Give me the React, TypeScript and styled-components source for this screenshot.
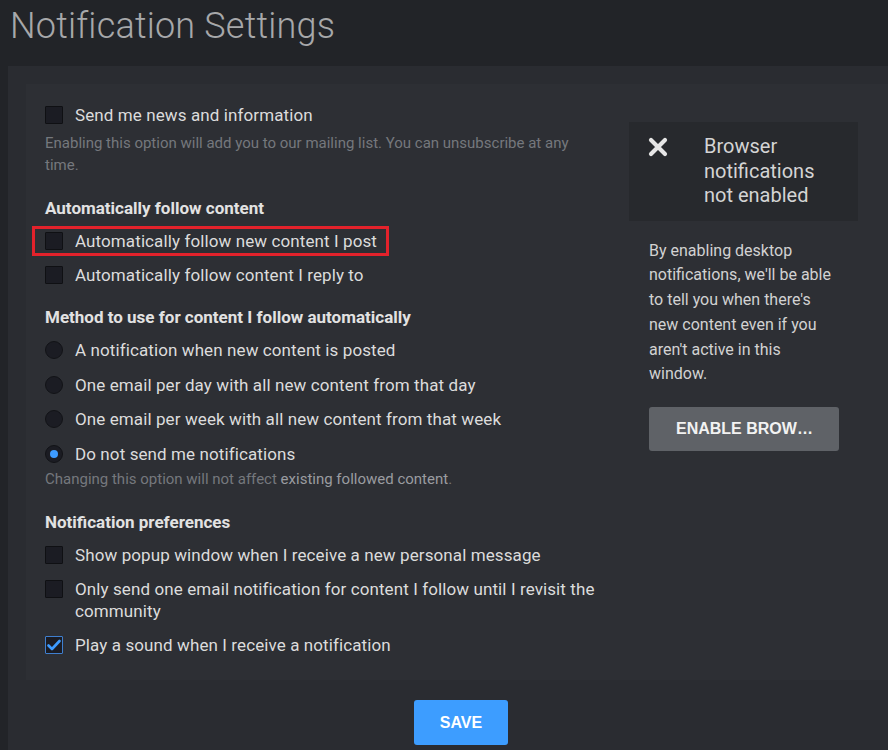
import React from "react";
import styled, { createGlobalStyle } from "styled-components";

const GlobalStyle = createGlobalStyle`
  html, body { margin: 0; padding: 0; background: #222428; }
  body { font-family: Roboto, "Noto Sans", Arial, sans-serif; overflow: hidden; }
  * { box-sizing: border-box; }
`;

const Page = styled.div`
  padding-left: 8px;
  min-height: 750px;
`;

const Title = styled.h1`
  margin: 0;
  height: 66px;
  padding: 8px 0 0 2px;
  font-family: Roboto, sans-serif;
  font-weight: 300;
  font-size: 36px;
  line-height: 36px;
  color: #a7a8aa;
  letter-spacing: 0.2px;
`;

const OuterPanel = styled.div`
  background: #2a2c31;
  padding: 18px 0 0 18px;
  min-height: 700px;
`;

const InnerPanel = styled.div`
  background: #2d2f34;
  padding: 14px 19px 18px 19px;
  display: flex;
  gap: 32px;
`;

const LeftCol = styled.div`
  width: 552px;
  display: flex;
  flex-direction: column;
`;

const RightCol = styled.div`
  width: 229px;
  margin-top: 24px;
  display: flex;
  flex-direction: column;
`;

const Row = styled.label<{ $highlight?: boolean; $radio?: boolean }>`
  position: relative;
  display: flex;
  align-items: flex-start;
  gap: 12px;
  padding: ${(p) => (p.$radio ? "6.25px 0" : "6px 0")};
  width: ${(p) => (p.$highlight ? "fit-content" : "auto")};
  &::after {
    content: "";
    display: ${(p) => (p.$highlight ? "block" : "none")};
    position: absolute;
    top: 2px;
    bottom: 2px;
    left: -13px;
    right: -12px;
    border: 3px solid #e3222b;
  }
`;

const Label = styled.span`
  font-size: 17px;
  line-height: 22px;
  letter-spacing: 0.1px;
  color: #dcdcdc;
`;

const Box = styled.span<{ $checked?: boolean }>`
  flex: none;
  width: 18px;
  height: 18px;
  margin-top: 2px;
  background: #1b1c23;
  border: 1px solid ${(p) => (p.$checked ? "#3f7fcf" : "#0f1013")};
  border-radius: 1px;
  display: flex;
  align-items: center;
  justify-content: center;
`;

const Radio = styled.span<{ $checked?: boolean }>`
  flex: none;
  width: 18px;
  height: 18px;
  margin-top: 2px;
  border-radius: 50%;
  background: #1b1c23;
  border: 1px solid #121317;
  display: flex;
  align-items: center;
  justify-content: center;
  &::after {
    content: "";
    display: ${(p) => (p.$checked ? "block" : "none")};
    width: 8px;
    height: 8px;
    border-radius: 50%;
    background: #3d9bff;
  }
`;

const Help = styled.p<{ $tight?: boolean }>`
  margin: ${(p) => (p.$tight ? "-3px" : "0")} 0 7px 0;
  font-size: 15px;
  line-height: 22px;
  color: #75787d;
`;

const HelpLink = styled.span`
  color: #9a9ca0;
`;

const Heading = styled.h3`
  margin: 15px 0 6px 0;
  font-size: 17px;
  line-height: 20px;
  font-weight: 700;
  color: #e2e2e2;
`;

const StatusBox = styled.div`
  background: #27292d;
  display: flex;
  padding: 12px 10px 13px 19px;
  gap: 36px;
  min-height: 98px;
`;

const StatusIcon = styled.svg`
  flex: none;
  margin-top: 3px;
`;

const StatusText = styled.div`
  font-size: 20px;
  line-height: 24.5px;
  color: #d4d4d4;
`;

const SideBody = styled.div`
  padding-left: 20px;
  width: 210px;
`;

const SidePara = styled.p`
  margin: 18px 0 20px 0;
  font-size: 16px;
  line-height: 24.8px;
  color: #d2d2d2;
`;

const GreyButton = styled.button`
  width: 190px;
  height: 44px;
  border: none;
  border-radius: 3px;
  background: #5f6267;
  color: #f2f2f2;
  font-family: "Liberation Sans", Arial, sans-serif;
  font-weight: 700;
  font-size: 16px;
  padding: 0 26px 0 27px;
  white-space: nowrap;
  overflow: hidden;
  text-overflow: ellipsis;
  text-align: left;
`;

const Footer = styled.div`
  display: flex;
  justify-content: center;
  padding: 20px 0 40px 8px;
`;

const SaveButton = styled.button`
  width: 94px;
  height: 45px;
  border: none;
  border-radius: 3px;
  background: #3d9dff;
  color: #ffffff;
  font-family: "Liberation Sans", Arial, sans-serif;
  font-weight: 700;
  font-size: 16px;
`;

const Check = () => (
  <svg width="14" height="12" viewBox="0 0 14 12">
    <path d="M1.5 6.5 L5 10 L12.5 2" fill="none" stroke="#3d9bff" strokeWidth="2.6" strokeLinecap="round" strokeLinejoin="round" />
  </svg>
);

const CheckRow = ({ checked, highlight, children }: { checked?: boolean; highlight?: boolean; children: React.ReactNode }) => (
  <Row $highlight={highlight}>
    <Box $checked={checked}>{checked && <Check />}</Box>
    <Label>{children}</Label>
  </Row>
);

const RadioRow = ({ checked, children }: { checked?: boolean; children: React.ReactNode }) => (
  <Row $radio>
    <Radio $checked={checked} />
    <Label>{children}</Label>
  </Row>
);

export default function App() {
  return (
    <>
      <GlobalStyle />
      <Page>
        <Title>Notification Settings</Title>
        <OuterPanel>
          <InnerPanel>
            <LeftCol>
              <CheckRow>Send me news and information</CheckRow>
              <Help>
                Enabling this option will add you to our mailing list. You can unsubscribe at any time.
              </Help>
              <Heading>Automatically follow content</Heading>
              <CheckRow highlight>Automatically follow new content I post</CheckRow>
              <CheckRow>Automatically follow content I reply to</CheckRow>
              <Heading>Method to use for content I follow automatically</Heading>
              <RadioRow>A notification when new content is posted</RadioRow>
              <RadioRow>One email per day with all new content from that day</RadioRow>
              <RadioRow>One email per week with all new content from that week</RadioRow>
              <RadioRow checked>Do not send me notifications</RadioRow>
              <Help $tight>
                Changing this option will not affect <HelpLink>existing followed content</HelpLink>.
              </Help>
              <Heading>Notification preferences</Heading>
              <CheckRow>Show popup window when I receive a new personal message</CheckRow>
              <CheckRow>Only send one email notification for content I follow until I revisit the community</CheckRow>
              <CheckRow checked>Play a sound when I receive a notification</CheckRow>
            </LeftCol>
            <RightCol>
              <StatusBox>
                <StatusIcon width="20" height="20" viewBox="0 0 20 20">
                  <path d="M3 3 L17 17 M17 3 L3 17" stroke="#e6e6e6" strokeWidth="4.2" strokeLinecap="round" />
                </StatusIcon>
                <StatusText>
                  Browser
                  <br />
                  notifications
                  <br />
                  not enabled
                </StatusText>
              </StatusBox>
              <SideBody>
                <SidePara>
                  By enabling desktop notifications, we'll be able to tell you when there's new content even if you
                  aren't active in this window.
                </SidePara>
                <GreyButton>ENABLE BROWSER NOTIFICATIONS</GreyButton>
              </SideBody>
            </RightCol>
          </InnerPanel>
          <Footer>
            <SaveButton>SAVE</SaveButton>
          </Footer>
        </OuterPanel>
      </Page>
    </>
  );
}
